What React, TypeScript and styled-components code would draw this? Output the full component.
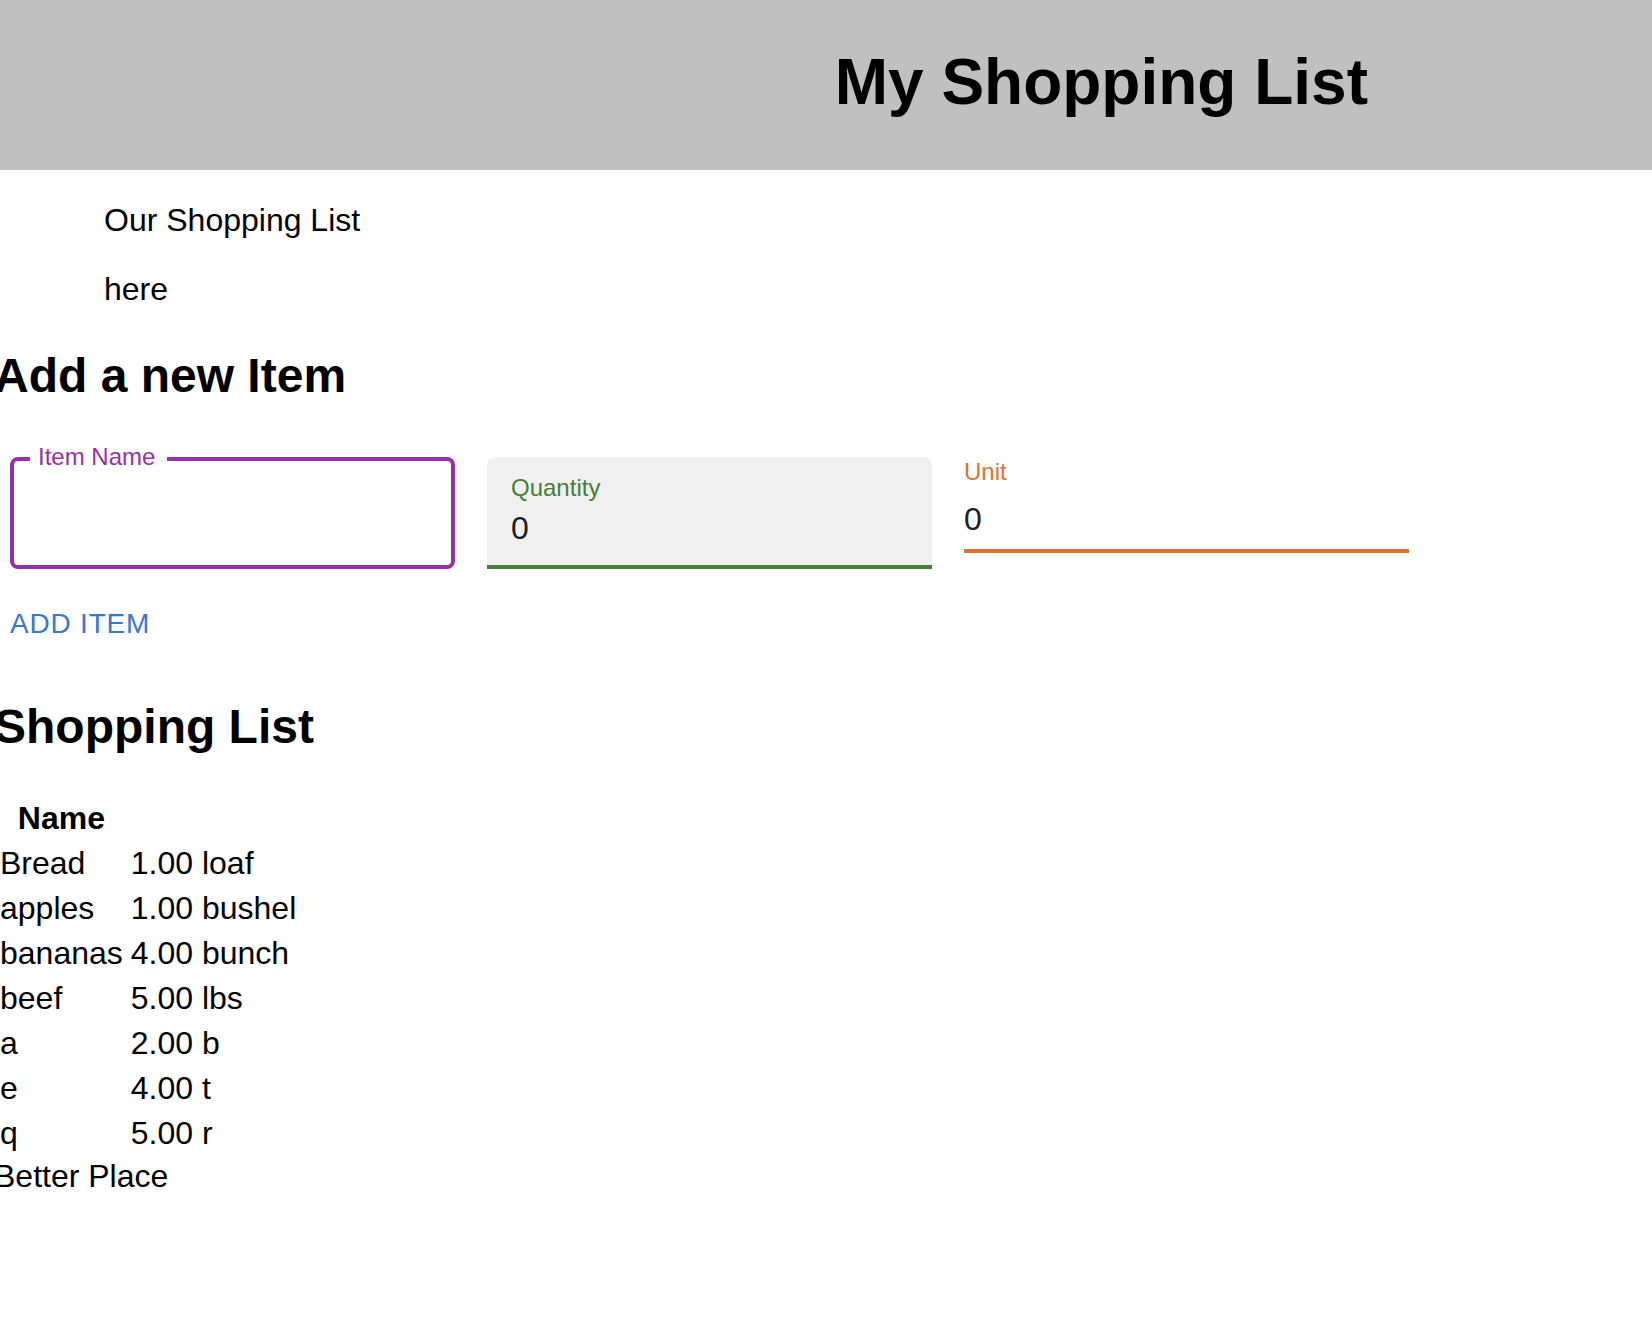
import React from "react";
import styled, { createGlobalStyle } from "styled-components";

const GlobalStyle = createGlobalStyle`
  html, body {
    margin: 0;
    padding: 0;
    background: #ffffff;
  }
  body {
    font-family: "Liberation Sans", Arial, Helvetica, sans-serif;
    font-size: 32px;
    color: #000000;
  }
  * { box-sizing: border-box; }
`;

const Header = styled.header`
  display: grid;
  grid-template-columns: 1fr 2fr;
  height: 170px;
  padding-top: 45px;
  background: #c0c0c0;
`;

const Title = styled.h1`
  grid-column: 2;
  margin: 0;
  text-align: center;
  font-size: 64px;
  font-weight: 700;
  line-height: normal;
`;

const Main = styled.main`
  margin-left: -6px;
`;

const Intro = styled.section`
  padding-left: 110px;
`;

const Paragraph = styled.p`
  margin: 32px 0;
  font-size: 32px;
  line-height: normal;
`;

const SectionTitle = styled.h2`
  margin: 39.84px 0;
  font-size: 48px;
  font-weight: 700;
  line-height: normal;
`;

const Form = styled.form`
  display: flex;
  flex-direction: column;
  align-items: flex-start;
`;

const FieldRow = styled.div`
  display: flex;
  align-items: flex-start;
  gap: 32px;
  padding: 14px 16px 18px;
`;

const OutlinedBox = styled.div<{ $color: string }>`
  position: relative;
  width: 445px;
  height: 112px;
  border: 4px solid ${(p) => p.$color};
  border-radius: 8px;
  display: flex;
  align-items: center;
  padding: 0 24px;
`;

const NotchLabel = styled.label<{ $color: string }>`
  position: absolute;
  top: -16px;
  left: 16px;
  padding: 0 12px 0 8px;
  background: #ffffff;
  color: ${(p) => p.$color};
  font-size: 24px;
  line-height: 24px;
  white-space: nowrap;
`;

const FilledBox = styled.div<{ $color: string }>`
  width: 445px;
  height: 112px;
  background: #f0f0f0;
  border-radius: 8px 8px 0 0;
  border-bottom: 4px solid ${(p) => p.$color};
  display: flex;
  flex-direction: column;
  padding: 19px 24px 0;
  gap: 13px;
`;

const StandardBox = styled.div<{ $color: string }>`
  width: 445px;
  height: 96px;
  border-bottom: 4px solid ${(p) => p.$color};
  display: flex;
  flex-direction: column;
  padding-top: 3px;
  gap: 20px;
`;

const FieldLabel = styled.label<{ $color: string }>`
  color: ${(p) => p.$color};
  font-size: 24px;
  line-height: 24px;
  white-space: nowrap;
`;

const ValueInput = styled.input`
  width: 100%;
  height: 32px;
  padding: 0;
  margin: 0;
  border: none;
  outline: none;
  background: transparent;
  font-family: "Liberation Sans", Arial, Helvetica, sans-serif;
  font-size: 32px;
  color: #212121;
`;

const TextButton = styled.button`
  border: none;
  background: transparent;
  padding: 12px 16px;
  margin: 0;
  font-family: "Liberation Sans", Arial, Helvetica, sans-serif;
  font-size: 28px;
  line-height: 49px;
  letter-spacing: 0.8px;
  text-transform: uppercase;
  color: #3a77cd;
  cursor: pointer;
`;

const Table = styled.table`
  border-spacing: 4px;
  font-size: 32px;
  margin-top: 2px;
`;

const HeadCell = styled.th`
  padding: 2px;
  font-weight: 700;
  text-align: center;
  line-height: normal;
`;

const Cell = styled.td`
  padding: 2px;
  line-height: normal;
  white-space: nowrap;
`;

const Footer = styled.div`
  font-size: 32px;
  line-height: normal;
`;

const items = [
  { name: "Bread", qty: 1, unit: "loaf" },
  { name: "apples", qty: 1, unit: "bushel" },
  { name: "bananas", qty: 4, unit: "bunch" },
  { name: "beef", qty: 5, unit: "lbs" },
  { name: "a", qty: 2, unit: "b" },
  { name: "e", qty: 4, unit: "t" },
  { name: "q", qty: 5, unit: "r" },
];

const PURPLE = "#9532a9";
const GREEN = "#477e3a";
const ORANGE = "#df7230";

export default function App() {
  return (
    <>
      <GlobalStyle />
      <Header>
        <Title>My Shopping List</Title>
      </Header>
      <Main>
        <Intro>
          <Paragraph>Our Shopping List</Paragraph>
          <Paragraph>here</Paragraph>
        </Intro>
        <SectionTitle>Add a new Item</SectionTitle>
        <Form onSubmit={(e) => e.preventDefault()}>
          <FieldRow>
            <OutlinedBox $color={PURPLE}>
              <NotchLabel $color={PURPLE}>Item Name</NotchLabel>
              <ValueInput defaultValue="" aria-label="Item Name" />
            </OutlinedBox>
            <FilledBox $color={GREEN}>
              <FieldLabel $color={GREEN}>Quantity</FieldLabel>
              <ValueInput defaultValue="0" aria-label="Quantity" />
            </FilledBox>
            <StandardBox $color={ORANGE}>
              <FieldLabel $color={ORANGE}>Unit</FieldLabel>
              <ValueInput defaultValue="0" aria-label="Unit" />
            </StandardBox>
          </FieldRow>
          <TextButton type="submit">Add Item</TextButton>
        </Form>
        <SectionTitle>Shopping List</SectionTitle>
        <Table>
          <thead>
            <tr>
              <HeadCell>Name</HeadCell>
            </tr>
          </thead>
          <tbody>
            {items.map((it) => (
              <tr key={it.name}>
                <Cell>{it.name}</Cell>
                <Cell>
                  {it.qty.toFixed(2)} {it.unit}
                </Cell>
              </tr>
            ))}
          </tbody>
        </Table>
        <Footer>Better Place</Footer>
      </Main>
    </>
  );
}
